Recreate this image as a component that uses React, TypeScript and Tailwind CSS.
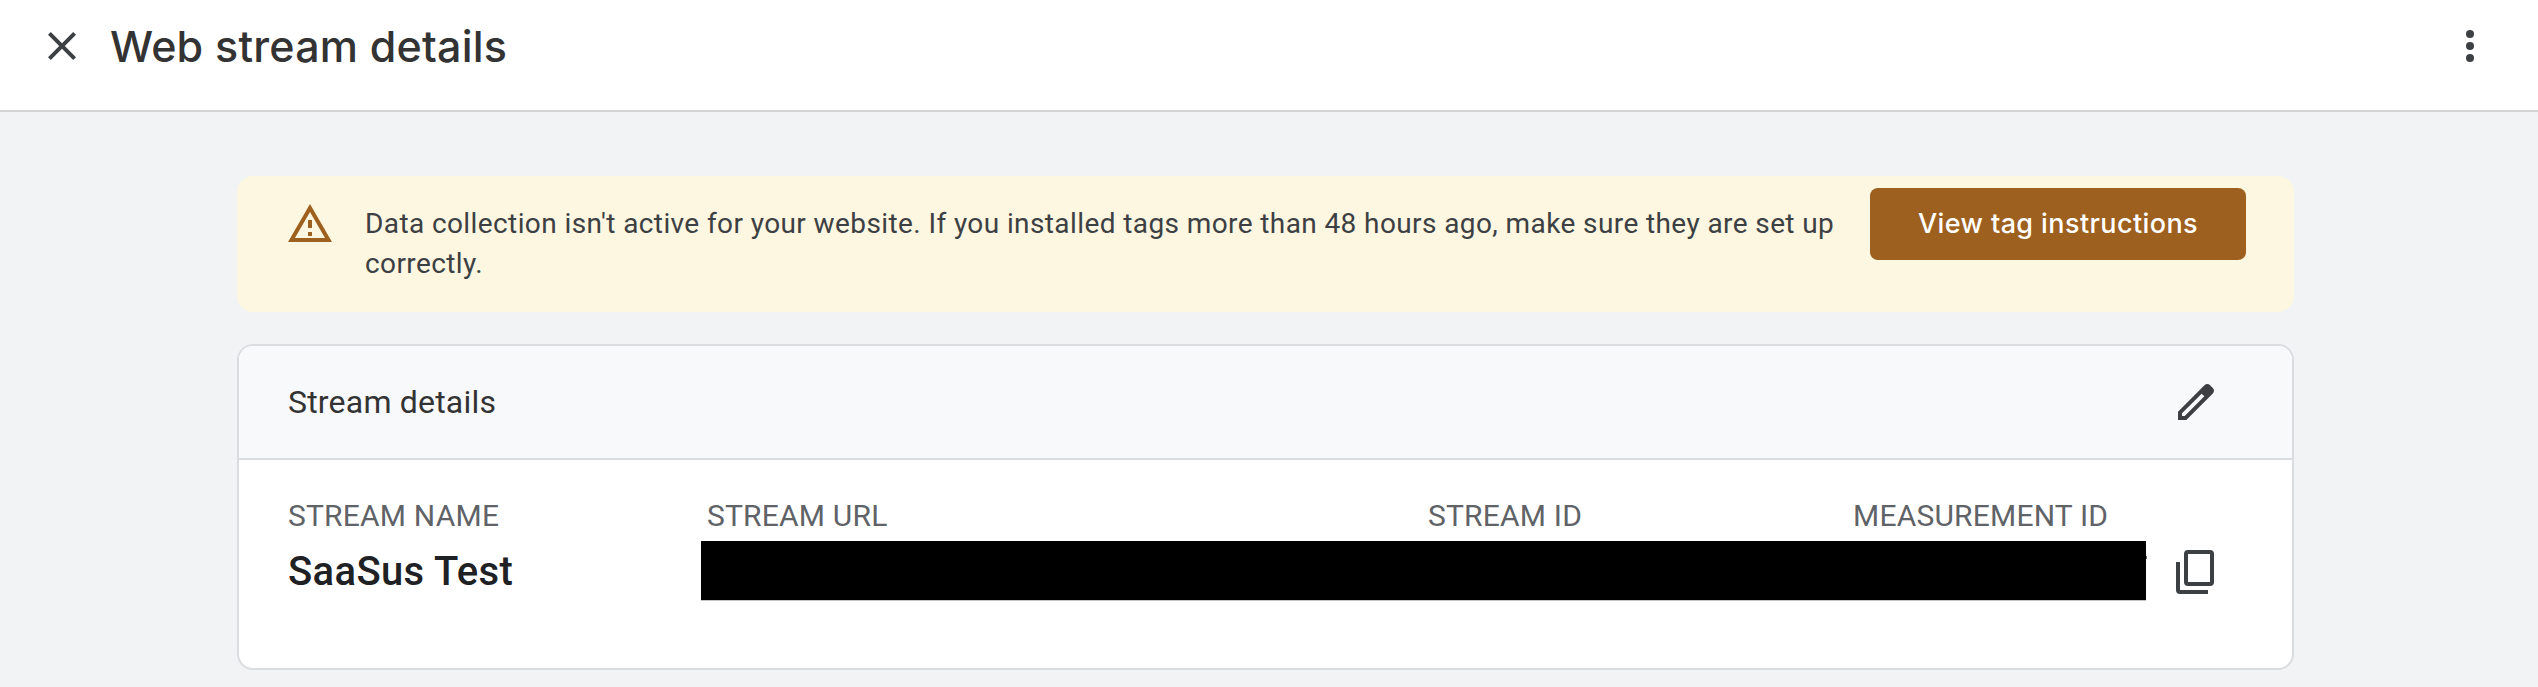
function CloseIcon() {
  return (
    <svg viewBox="0 0 24 24" className="size-12 shrink-0 fill-[#3c4043]">
      <path d="M19 6.41L17.59 5 12 10.59 6.41 5 5 6.41 10.59 12 5 17.59 6.41 19 12 13.41 17.59 19 19 17.59 13.41 12z" />
    </svg>
  );
}

function MoreIcon() {
  return (
    <svg viewBox="0 0 24 24" className="size-12 shrink-0 fill-[#3c4043]">
      <circle cx="12" cy="6" r="2" />
      <circle cx="12" cy="12" r="2" />
      <circle cx="12" cy="18" r="2" />
    </svg>
  );
}

function WarningIcon() {
  return (
    <svg viewBox="0 0 24 24" className="size-12 shrink-0 fill-[#9e601e]">
      <path d="M12 5.99L19.53 19H4.47L12 5.99M12 2L1 21h22L12 2zm1 14h-2v2h2v-2zm0-6h-2v4h2v-4z" />
    </svg>
  );
}

function EditIcon() {
  return (
    <svg viewBox="0 0 24 24" className="size-12 shrink-0 fill-[#3c4043]">
      <path d="M20.41 4.94l-1.35-1.35c-.78-.78-2.05-.78-2.83 0L3 16.82V21h4.18L20.41 7.77c.79-.78.79-2.05 0-2.83zM6.35 19H5v-1.35l9.82-9.82 1.35 1.35L6.35 19z" />
    </svg>
  );
}

function CopyIcon() {
  return (
    <svg viewBox="0 0 38 44" className="h-11 w-[38px] shrink-0 fill-none stroke-[#3c4043] stroke-4">
      <rect x="10" y="2" width="26" height="32" rx="2" />
      <path d="M2 12v28a2 2 0 0 0 2 2h28" />
    </svg>
  );
}

export default function App() {
  return (
    <div className="min-h-[687px] w-full bg-[#f1f3f4] font-[Roboto,sans-serif] text-[#3c4043]">
      <header className="flex h-28 items-start border-b-2 border-[#d4d5d7] bg-white pt-[22px] pr-11 pl-[37.5px]">
        <CloseIcon />
        <h1 className="ml-[24.5px] flex-1 font-[Inter,sans-serif] text-[43px] leading-12 font-medium tracking-[0.2px] text-[#333]">
          Web stream details
        </h1>
        <MoreIcon />
      </header>

      <main className="ml-[237px] w-[2057px] pt-16">
        <section className="flex h-[136px] items-start rounded-2xl bg-[#fdf6e0] pr-12 pl-[49px]">
          <div className="pt-6">
            <WarningIcon />
          </div>
          <p className="ml-[31px] w-[1505px] pt-7 text-[28px] leading-10 tracking-[0.4px]">
            Data collection isn't active for your website. If you installed tags more than 48 hours ago, make sure they are set up
            <br />
            correctly.
          </p>
          <button className="mt-3 h-[72px] w-[376px] shrink-0 rounded-lg bg-[#9e601e] font-[Inter,sans-serif] text-[27px] font-medium tracking-[0.4px] text-white">
            View tag instructions
          </button>
        </section>

        <section className="mt-8 h-[326px] overflow-hidden rounded-2xl border-2 border-[#dadce0] bg-white">
          <div className="flex h-[114px] items-center justify-between border-b-2 border-[#dadce0] bg-[#f8f9fb] pr-[72px] pl-[49px]">
            <h2 className="text-[32px] tracking-[0.2px] text-[#333]">Stream details</h2>
            <EditIcon />
          </div>
          <div className="pt-[38px] pl-[49px]">
            <div className="flex text-[30px] leading-9 tracking-[0.2px] text-[#5f6368]">
              <span className="w-[419px]">STREAM NAME</span>
              <span className="w-[721px]">STREAM URL</span>
              <span className="w-[425px]">STREAM ID</span>
              <span>MEASUREMENT ID</span>
            </div>
            <div className="mt-[7px] flex items-start">
              <span className="mt-[7px] w-[413px] text-[40px] leading-12 font-medium tracking-[0.36px] text-[#202124]">
                SaaSus Test
              </span>
              <div className="h-[60px] w-[1445px] border-b border-[#c4c4c4] bg-black" />
              <div className="mt-[15px] h-[3px] w-px bg-[#5f6368]" />
              <div className="mt-[9px] ml-[29px]">
                <CopyIcon />
              </div>
            </div>
          </div>
        </section>
      </main>
    </div>
  );
}
